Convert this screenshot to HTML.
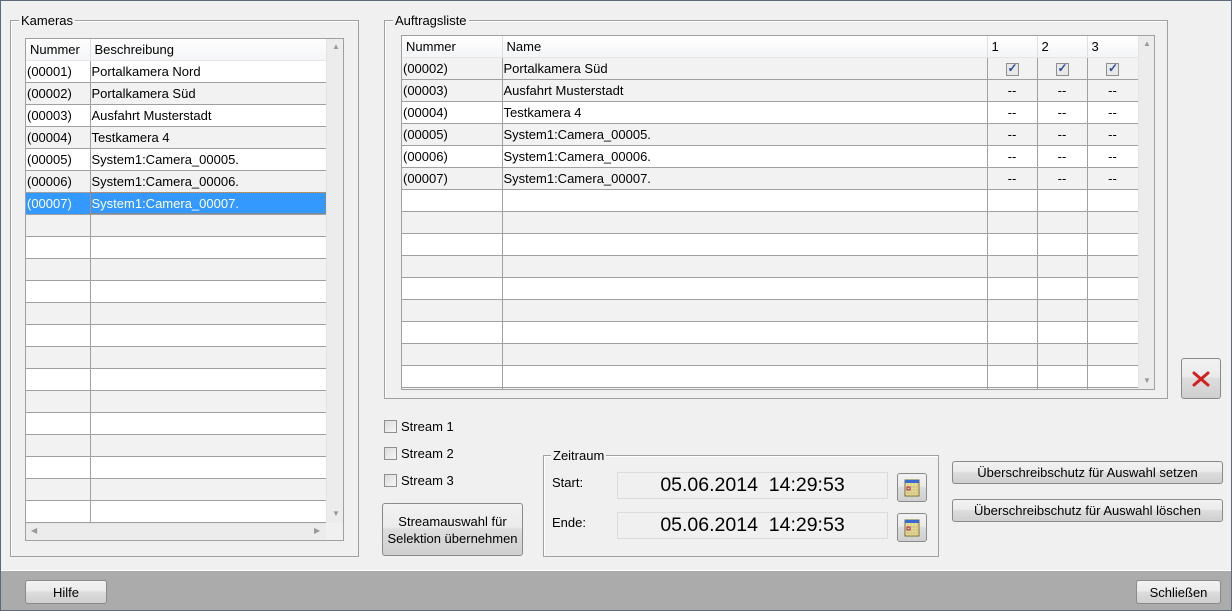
<!DOCTYPE html>
<html><head><meta charset="utf-8"><style>
*{box-sizing:border-box;margin:0;padding:0}
body{width:1232px;height:611px;overflow:hidden;background:#f0f0f0;font-family:"Liberation Sans",Arial,sans-serif;font-size:13px;color:#000;position:relative}
.frame{position:absolute;left:0;top:0;width:1232px;height:611px;border:1px solid #5c6b7a;pointer-events:none;z-index:9}
.abs{position:absolute}
.gb{position:absolute;border:1px solid #a0a0a0;box-shadow:inset 1px 1px 0 #fff}
.gbt{position:absolute;top:-8px;left:8px;background:#f0f0f0;padding:0 2px;font-size:13px}
.grid{position:absolute;border:1px solid #a0a0a0;background:#f0f0f0;overflow:hidden}
table{border-collapse:collapse;table-layout:fixed;position:absolute;left:0;top:0}
td{height:22px;border-right:1px solid #a0a0a0;border-bottom:1px solid #a0a0a0;padding:0 0 0 1px;white-space:nowrap;overflow:hidden}
tr.h td{height:21px;border-right:1px solid #e0e0e0;border-bottom:1px solid #e6e6e6;background:linear-gradient(#fff,#f4f5f7);padding-left:4px}
tr.w td{background:#fff}
tr.g td{background:#f2f2f2}
tr.s td{background:#3399ff;color:#fff}
.c{text-align:center;padding:0}
.btn{position:absolute;border:1px solid #8a8a8a;border-radius:3px;background:linear-gradient(#f2f2f2 0,#ebebeb 45%,#dddddd 50%,#cfcfcf 100%);text-align:center;display:flex;align-items:center;justify-content:center}
.cb{position:absolute;width:13px;height:13px;border:1px solid #8e8f8f;background:linear-gradient(135deg,#dcdcdc,#f6f6f6)}
.chk{display:inline-block;width:13px;height:13px;border:1px solid #8e8f8f;background:#e8e8e8;vertical-align:middle;position:relative}
.field{position:absolute;background:#f0f0f0;border:1px solid #dcdcdc;font-size:19.5px;text-align:center;line-height:25px}
.sbv{position:absolute;background:#ececec}
</style></head><body>
<div class="frame"></div>

<div class="gb" style="left:10px;top:20px;width:349px;height:537px"><span class="gbt">Kameras</span></div>
<div class="grid" style="left:25px;top:38px;width:319px;height:503px">
<table style="width:300px">
<colgroup><col style="width:64px"><col style="width:236px"></colgroup>
<tr class="h"><td>Nummer</td><td>Beschreibung</td></tr>
<tr class="w"><td>(00001)</td><td>Portalkamera Nord</td></tr>
<tr class="g"><td>(00002)</td><td>Portalkamera Süd</td></tr>
<tr class="w"><td>(00003)</td><td>Ausfahrt Musterstadt</td></tr>
<tr class="g"><td>(00004)</td><td>Testkamera 4</td></tr>
<tr class="w"><td>(00005)</td><td>System1:Camera_00005.</td></tr>
<tr class="g"><td>(00006)</td><td>System1:Camera_00006.</td></tr>
<tr class="s"><td>(00007)</td><td style="outline:1px dotted #c08040;outline-offset:-1px">System1:Camera_00007.</td></tr>
<tr class="g"><td></td><td></td></tr><tr class="w"><td></td><td></td></tr>
<tr class="g"><td></td><td></td></tr><tr class="w"><td></td><td></td></tr>
<tr class="g"><td></td><td></td></tr><tr class="w"><td></td><td></td></tr>
<tr class="g"><td></td><td></td></tr><tr class="w"><td></td><td></td></tr>
<tr class="g"><td></td><td></td></tr><tr class="w"><td></td><td></td></tr>
<tr class="g"><td></td><td></td></tr><tr class="w"><td></td><td></td></tr>
<tr class="g"><td></td><td></td></tr><tr class="w"><td></td><td></td></tr>
</table>
<div class="sbv" style="left:300px;top:0;width:18px;height:484px;border-left:1px solid #e4e4e4"></div>
<div class="abs" style="left:306px;top:3px;color:#999;font-size:8px">▲</div>
<div class="abs" style="left:306px;top:470px;color:#999;font-size:8px">▼</div>
<div class="sbv" style="left:0;top:484px;width:300px;height:17px;border-top:1px solid #e4e4e4"></div>
<div class="abs" style="left:5px;top:487px;color:#999;font-size:8px">◀</div>
<div class="abs" style="left:288px;top:487px;color:#999;font-size:8px">▶</div>
</div>

<div class="gb" style="left:384px;top:20px;width:784px;height:379px"><span class="gbt">Auftragsliste</span></div>
<div class="grid" style="left:401px;top:35px;width:754px;height:355px">
<table style="width:736px">
<colgroup><col style="width:100px"><col style="width:485px"><col style="width:50px"><col style="width:50px"><col style="width:51px"></colgroup>
<tr class="h"><td>Nummer</td><td>Name</td><td>1</td><td>2</td><td>3</td></tr>
<tr class="g"><td>(00002)</td><td>Portalkamera Süd</td><td class="c"><span class="chk"><span style="position:absolute;left:1px;top:-3px;color:#2a4a9a;font-size:12px;font-weight:bold">✓</span></span></td><td class="c"><span class="chk"><span style="position:absolute;left:1px;top:-3px;color:#2a4a9a;font-size:12px;font-weight:bold">✓</span></span></td><td class="c"><span class="chk"><span style="position:absolute;left:1px;top:-3px;color:#2a4a9a;font-size:12px;font-weight:bold">✓</span></span></td></tr>
<tr class="g"><td>(00003)</td><td>Ausfahrt Musterstadt</td><td class="c">--</td><td class="c">--</td><td class="c">--</td></tr>
<tr class="w"><td>(00004)</td><td>Testkamera 4</td><td class="c">--</td><td class="c">--</td><td class="c">--</td></tr>
<tr class="g"><td>(00005)</td><td>System1:Camera_00005.</td><td class="c">--</td><td class="c">--</td><td class="c">--</td></tr>
<tr class="w"><td>(00006)</td><td>System1:Camera_00006.</td><td class="c">--</td><td class="c">--</td><td class="c">--</td></tr>
<tr class="g"><td>(00007)</td><td>System1:Camera_00007.</td><td class="c">--</td><td class="c">--</td><td class="c">--</td></tr>
<tr class="w"><td></td><td></td><td></td><td></td><td></td></tr>
<tr class="g"><td></td><td></td><td></td><td></td><td></td></tr>
<tr class="w"><td></td><td></td><td></td><td></td><td></td></tr>
<tr class="g"><td></td><td></td><td></td><td></td><td></td></tr>
<tr class="w"><td></td><td></td><td></td><td></td><td></td></tr>
<tr class="g"><td></td><td></td><td></td><td></td><td></td></tr>
<tr class="w"><td></td><td></td><td></td><td></td><td></td></tr>
<tr class="g"><td></td><td></td><td></td><td></td><td></td></tr>
<tr class="w"><td></td><td></td><td></td><td></td><td></td></tr>
<tr class="g"><td></td><td></td><td></td><td></td><td></td></tr>
</table>
<div class="sbv" style="left:736px;top:0;width:17px;height:353px;border-left:1px solid #e4e4e4"></div>
<div class="abs" style="left:741px;top:3px;color:#999;font-size:8px">▲</div>
<div class="abs" style="left:741px;top:340px;color:#999;font-size:8px">▼</div>
</div>

<div class="btn" style="left:1181px;top:358px;width:40px;height:41px">
<svg width="18" height="16" viewBox="0 0 18 16"><path d="M2 2 L16 14 M16 2 L2 14" stroke="#d02020" stroke-width="3" stroke-linecap="round"/></svg>
</div>

<div class="cb" style="left:384px;top:420px"></div><div class="abs" style="left:401px;top:419px">Stream 1</div>
<div class="cb" style="left:384px;top:447px"></div><div class="abs" style="left:401px;top:446px">Stream 2</div>
<div class="cb" style="left:384px;top:474px"></div><div class="abs" style="left:401px;top:473px">Stream 3</div>
<div class="btn" style="left:382px;top:503px;width:141px;height:53px;line-height:17px">Streamauswahl für<br>Selektion übernehmen</div>

<div class="gb" style="left:543px;top:455px;width:396px;height:102px"><span class="gbt" style="left:7px">Zeitraum</span></div>
<div class="abs" style="left:552px;top:475px">Start:</div>
<div class="abs" style="left:552px;top:515px">Ende:</div>
<div class="field" style="left:617px;top:472px;width:271px;height:27px">05.06.2014&nbsp;&nbsp;14:29:53</div>
<div class="field" style="left:617px;top:512px;width:271px;height:27px">05.06.2014&nbsp;&nbsp;14:29:53</div>
<div class="btn" style="left:897px;top:473px;width:30px;height:29px"><svg width="18" height="18" viewBox="0 0 18 18"><rect x="2" y="1" width="14" height="16" fill="#e8e0a0" stroke="#7a6a30"/><rect x="2" y="1" width="14" height="3" fill="#3a6ad0"/><path d="M5 4v13M8 4v13M11 4v13M14 4v13M2 8h14M2 11h14M2 14h14" stroke="#c8bc70" stroke-width=".7"/><rect x="4" y="8" width="3" height="3" fill="none" stroke="#b02060"/></svg></div>
<div class="btn" style="left:897px;top:513px;width:30px;height:29px"><svg width="18" height="18" viewBox="0 0 18 18"><rect x="2" y="1" width="14" height="16" fill="#e8e0a0" stroke="#7a6a30"/><rect x="2" y="1" width="14" height="3" fill="#3a6ad0"/><path d="M5 4v13M8 4v13M11 4v13M14 4v13M2 8h14M2 11h14M2 14h14" stroke="#c8bc70" stroke-width=".7"/><rect x="4" y="8" width="3" height="3" fill="none" stroke="#b02060"/></svg></div>

<div class="btn" style="left:952px;top:461px;width:271px;height:23px">Überschreibschutz für Auswahl setzen</div>
<div class="btn" style="left:952px;top:499px;width:271px;height:23px">Überschreibschutz für Auswahl löschen</div>

<div class="abs" style="left:0;top:570px;width:1232px;height:41px;background:#ababab;border-top:1px solid #fff"></div>
<div class="btn" style="left:25px;top:580px;width:82px;height:24px">Hilfe</div>
<div class="btn" style="left:1136px;top:580px;width:85px;height:24px">Schließen</div>
</body></html>
